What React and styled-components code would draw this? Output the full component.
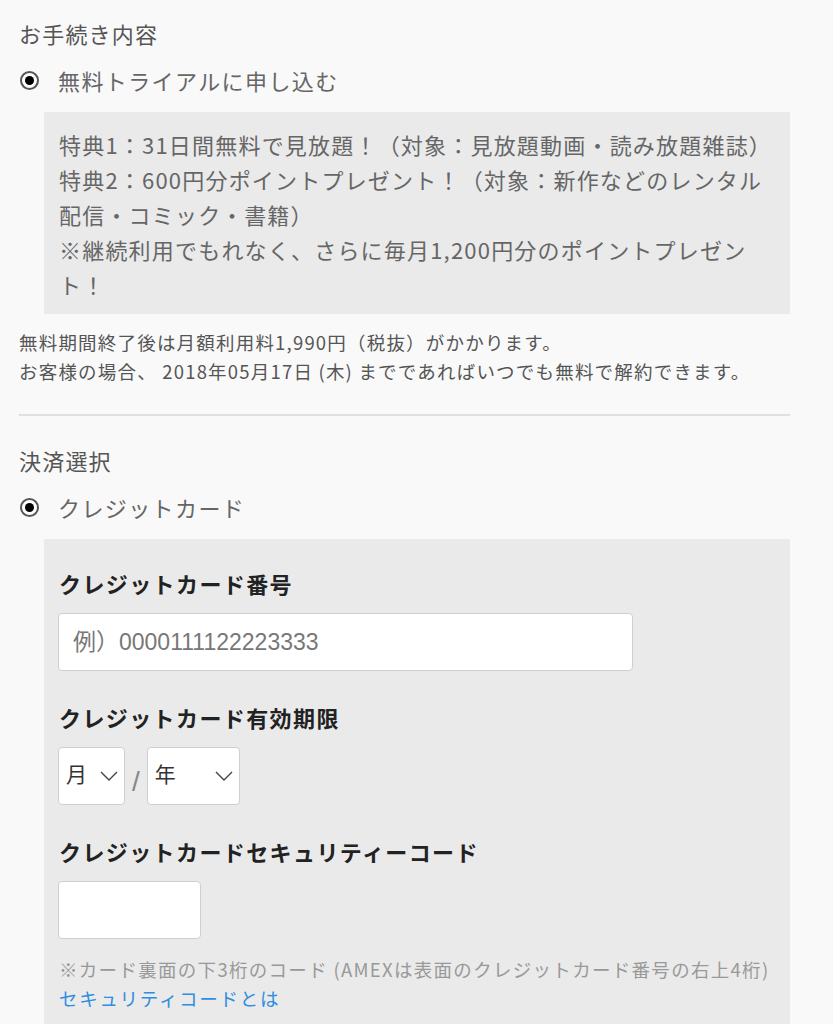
import React from "react";
import styled, { createGlobalStyle } from "styled-components";

const GlobalStyle = createGlobalStyle`
  html, body {
    margin: 0;
    padding: 0;
    background: #f9f9f9;
  }
  body {
    font-family: "Noto Sans CJK JP", "Noto Sans", sans-serif;
    color: #555;
  }
`;

const Page = styled.div`
  width: 771px;
  padding: 11px 0 0 19px;
`;

const Section = styled.section`
  padding-bottom: ${(p) => p.$pb || 0}px;
  border-bottom: ${(p) => (p.$divider ? "2px solid #e0e0e0" : "none")};
  margin-bottom: ${(p) => p.$mb || 0}px;
`;

const Heading = styled.h2`
  margin: 0;
  font-size: 22px;
  font-weight: 400;
  letter-spacing: 1.2px;
  line-height: 44px;
  color: #555;
`;

const RadioRow = styled.label`
  display: flex;
  align-items: center;
  gap: 19px;
  height: 50px;
  margin-bottom: 7px;
  font-size: 22px;
  letter-spacing: 1.4px;
  color: #666;
`;

const RadioDot = styled.span`
  width: 19px;
  height: 19px;
  margin-left: 1px;
  box-sizing: border-box;
  border-radius: 50%;
  border: 2px solid #555;
  background: #fff;
  display: flex;
  align-items: center;
  justify-content: center;
  &::after {
    content: "";
    width: 9px;
    height: 9px;
    border-radius: 50%;
    background: #000;
  }
`;

const GrayBox = styled.div`
  margin-left: 25px;
  background: #eaeaea;
  padding: ${(p) => p.$pad || "15px 15px 12px"};
`;

const BenefitText = styled.p`
  margin: 0;
  font-size: 22px;
  letter-spacing: 1.2px;
  line-height: 35px;
  color: #666;
`;

const Note = styled.p`
  margin: 14px 0 0;
  font-size: 18.5px;
  letter-spacing: 1.2px;
  line-height: 29px;
  color: #555;
`;

const FieldLabel = styled.h3`
  margin: 0;
  font-size: 22px;
  font-weight: 700;
  letter-spacing: 1.4px;
  line-height: 32px;
  color: #222;
`;

const Field = styled.div`
  & + & {
    margin-top: 30px;
  }
`;

const TextInput = styled.input`
  display: block;
  box-sizing: border-box;
  margin-top: 14px;
  margin-left: -1px;
  width: ${(p) => p.$w}px;
  height: 58px;
  padding: 0 14px;
  border: 1.5px solid #cfcfcf;
  border-radius: 4px;
  background: #fff;
  font-family: "Liberation Sans", "Noto Sans CJK JP", sans-serif;
  font-size: 23px;
  color: #333;
  outline: none;
  &::placeholder {
    color: #777;
  }
`;

const SelectRow = styled.div`
  display: flex;
  align-items: center;
  gap: 7px;
  margin-top: 14px;
  margin-left: -1px;
  font-size: 22px;
  color: #666;
`;

const SelectBox = styled.div`
  box-sizing: border-box;
  width: ${(p) => p.$w}px;
  height: 58px;
  padding: 0 6px 0 7px;
  border: 1.5px solid #cfcfcf;
  border-radius: 4px;
  background: #fff;
  display: flex;
  align-items: center;
  justify-content: space-between;
  font-size: 21px;
  color: #333;
  span {
    margin-top: -6px;
  }
`;

const Slash = styled.span`
  font-family: "Liberation Sans", sans-serif;
  font-size: 28px;
  font-weight: 300;
  color: #888;
  margin-top: 12px;
`;

const Hint = styled.p`
  margin: 16px 0 0;
  font-size: 18.5px;
  letter-spacing: 1.3px;
  line-height: 29px;
  white-space: nowrap;
  color: #999;
`;

const HelpLink = styled.a`
  display: block;
  font-size: 18.5px;
  letter-spacing: 1.7px;
  line-height: 29px;
  color: #2f8ee0;
  text-decoration: none;
`;

const Chevron = () => (
  <svg width="18" height="10" viewBox="0 0 18 10" fill="none">
    <path d="M1 1l8 8 8-8" stroke="#444" strokeWidth="1.4" />
  </svg>
);

const Select = ({ label, width }) => (
  <SelectBox $w={width}>
    <span>{label}</span>
    <Chevron />
  </SelectBox>
);

export default function App() {
  return (
    <Page>
      <GlobalStyle />
      <Section $divider $pb={28} $mb={22}>
        <Heading>お手続き内容</Heading>
        <RadioRow>
          <RadioDot />
          無料トライアルに申し込む
        </RadioRow>
        <GrayBox>
          <BenefitText>
            特典1：31日間無料で見放題！（対象：見放題動画・読み放題雑誌）
            <br />
            特典2：600円分ポイントプレゼント！（対象：新作などのレンタル配信・コミック・書籍）
            <br />
            ※継続利用でもれなく、さらに毎月1,200円分のポイントプレゼント！
          </BenefitText>
        </GrayBox>
        <Note>
          無料期間終了後は月額利用料1,990円（税抜）がかかります。
          <br />
          お客様の場合、 2018年05月17日 (木) までであればいつでも無料で解約できます。
        </Note>
      </Section>

      <Section>
        <Heading>決済選択</Heading>
        <RadioRow>
          <RadioDot />
          クレジットカード
        </RadioRow>
        <GrayBox $pad="28px 15px 30px">
          <Field>
            <FieldLabel>クレジットカード番号</FieldLabel>
            <TextInput $w={575} placeholder="例）0000111122223333" />
          </Field>
          <Field>
            <FieldLabel>クレジットカード有効期限</FieldLabel>
            <SelectRow>
              <Select label="月" width={67} />
              <Slash>/</Slash>
              <Select label="年" width={93} />
            </SelectRow>
          </Field>
          <Field>
            <FieldLabel>クレジットカードセキュリティーコード</FieldLabel>
            <TextInput $w={143} />
            <Hint>
              ※カード裏面の下3桁のコード (AMEXは表面のクレジットカード番号の右上4桁)
            </Hint>
            <HelpLink href="#">セキュリティコードとは</HelpLink>
          </Field>
        </GrayBox>
      </Section>
    </Page>
  );
}
